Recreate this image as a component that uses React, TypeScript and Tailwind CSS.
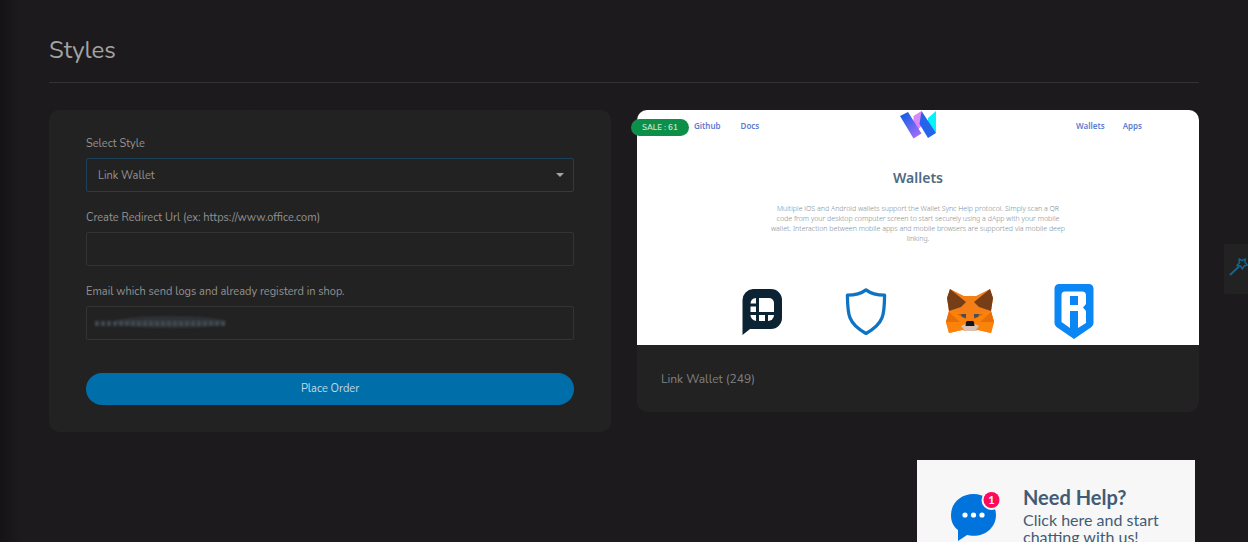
import { useState } from 'react';

const wallets = [
  { name: 'Pillar', icon: <PillarIcon /> },
  { name: 'Trust', icon: <ShieldIcon /> },
  { name: 'MetaMask', icon: <FoxIcon /> },
  { name: 'Ronin', icon: <RoninIcon /> },
];

function PillarIcon() {
  return (
    <svg width="40" height="46" viewBox="0 0 40 46" aria-hidden="true">
      <path d="M11 0h18a11 11 0 0 1 11 11v18a11 11 0 0 1-11 11H8l-7.500 6V11A11 11 0 0 1 11 0Z" fill="#0b2333" />
      <g fill="#fff">
        <path d="M14 9v5.500H8.500A6 6 0 0 1 14 9Z" />
        <path d="M17 9h10a5 5 0 0 1 5 5v9H17Z" />
        <path d="M8.500 17.500H14V23H8.500Z" />
        <path d="M8.500 26H14v6a6 6 0 0 1-5.500-6Z" />
        <path d="M17 26h6v6h-6Z" />
        <path d="M26 26h6a6 6 0 0 1-6 6Z" />
      </g>
    </svg>
  );
}

function ShieldIcon() {
  return (
    <svg width="42" height="47" viewBox="0 0 40 46" fill="none" aria-hidden="true">
      <path
        d="M20 1.800C14.500 6 8.500 7 1.800 7c.2 19 .6 28 18.200 37.500C37.600 35 38 26 38.200 7 31.500 7 25.500 6 20 1.800Z"
        stroke="#0f73c4"
        strokeWidth="3.200"
        strokeLinejoin="round"
      />
    </svg>
  );
}

function FoxIcon() {
  return (
    <svg width="48" height="45" viewBox="0 0 48 45" aria-hidden="true">
      <path d="M4 0 18 7h12L44 0l3 9-2 13 3 11-3 11-13-3-4 1h-8l-4-1-13 3L0 33l3-11L1 9Z" fill="#f57f17" />
      <path d="m3 22 13 2 4 8-4 9L3 44 0 33Zm42 0-13 2-4 8 4 9 13 3 3-11Z" fill="#fb830a" />
      <path d="m0 33 3-10 11 10Zm48 0-3-10-11 10Z" fill="#e86d08" />
      <path d="M4 0 20 13 15 18 3 22 1 9Zm40 0L28 13l5 5 12 4 2-13Z" fill="#763d16" />
      <path d="m11 25 8 0 1 5Zm26 0-8 0-1 5Z" fill="#d5600c" />
      <path d="m15 25 5 0 0 4-4-1Zm18 0-5 0 0 4 4-1Z" fill="#4a4c50" />
      <path d="m15 37 6-3h6l6 3-4 5H19Z" fill="#d9c2b4" />
      <path d="m20 33 1-1h6l1 1 .500 4h-9Z" fill="#161616" />
    </svg>
  );
}

function RoninIcon() {
  return (
    <svg width="40" height="55" viewBox="0 0 40 55" aria-hidden="true">
      <path d="M5 0h30a4.500 4.500 0 0 1 4.500 4.500V39a5 5 0 0 1-2 4L20 55 2.500 43a5 5 0 0 1-2-4V4.500A4.500 4.500 0 0 1 5 0Z" fill="#0a86f5" />
      <path
        d="M11 7.500h17a4 4 0 0 1 4 4V20l-3 3.500 3 3.500v12l-8 5V27h-8v17l-8.500-6V11A3.500 3.500 0 0 1 11 7.500ZM16 12v9h8v-9Z"
        fill="#fff"
        fillRule="evenodd"
      />
    </svg>
  );
}

function Logo() {
  return (
    <svg width="38" height="28" viewBox="0 0 38 28" aria-hidden="true">
      <defs>
        <linearGradient id="wave" x1="0" y1="0" x2="0.6" y2="1">
          <stop offset="0.2" stopColor="#2060e8" />
          <stop offset="1" stopColor="#9b6cf8" />
        </linearGradient>
      </defs>
      <path d="M22.500 0v15L14.500 23V5Z" fill="#dc86f8" />
      <path d="M37 0v22l-8-9V7Z" fill="#06f3fd" />
      <path d="m1 5 8-4 13.500 21.500-8 5Z" fill="url(#wave)" />
      <path d="M22.500 0 37 22l-8 5-8.500-14Z" fill="#2563eb" />
    </svg>
  );
}

function ChatWidget() {
  return (
    <button
      type="button"
      className="absolute right-[53px] bottom-0 flex h-[82px] w-[278px] items-start gap-[23px] overflow-hidden bg-[#f7f7f7] pt-[27px] pl-[34px] text-left font-['Lato',sans-serif] text-[#425b76]"
    >
      <svg width="49" height="52" viewBox="0 0 49 52" className="mt-1 shrink-0" aria-hidden="true">
        <path d="M22.500 3C10 3 0 12 0 24c0 7 2.500 11.500 7 15v11l9-6c2 .5 4 .8 6.500.8C35 44.800 45 36 45 24S35 3 22.500 3Z" fill="#0073dd" />
        <g fill="#fff">
          <circle cx="14" cy="24" r="2.600" />
          <circle cx="22.500" cy="24" r="2.600" />
          <circle cx="31" cy="24" r="2.600" />
        </g>
        <circle cx="40.500" cy="9" r="10" fill="#f7f7f7" />
        <circle cx="40.500" cy="9" r="8" fill="#ff0a5b" />
        <text x="40.500" y="13" textAnchor="middle" fontSize="11" fontWeight="700" fill="#fff">1</text>
      </svg>
      <span>
        <strong className="block text-xl leading-5 font-bold">Need Help?</strong>
        <span className="mt-1 block text-base leading-[17px]">
          Click here and start
          <br />
          chatting with us!
        </span>
      </span>
    </button>
  );
}

function StylePreview() {
  return (
    <article className="relative rounded-[10px] bg-[#222]">
      <span className="absolute top-[9px] -left-1.5 rounded-full bg-[#0c8f49] px-[11px] text-[8px] leading-[17px] font-semibold text-[#d5e8dc]">
        SALE : 61
      </span>
      <div className="rounded-t-[10px] bg-white pb-1.5 font-['Noto_Sans',sans-serif]">
        <nav className="flex items-start justify-between px-[57px] pt-px text-[8px] leading-4 font-semibold text-[#5c7bd0]">
          <div className="mt-[7px] flex w-20 gap-5">
            <a href="#github">Github</a>
            <a href="#docs">Docs</a>
          </div>
          <Logo />
          <div className="mt-[7px] flex w-20 justify-end gap-[18px]">
            <a href="#wallets">Wallets</a>
            <a href="#apps">Apps</a>
          </div>
        </nav>
        <h2 className="mt-[29px] text-center text-sm leading-5 font-semibold text-[#4f6b80]">Wallets</h2>
        <p className="mx-auto mt-4 max-w-[296px] text-center text-[7px] leading-[10px] font-light text-[#818c93]">
          Multiple iOS and Android wallets support the Wallet Sync Help protocol. Simply scan a QR code from your
          desktop computer screen to start securely using a dApp with your mobile wallet. Interaction between mobile
          apps and mobile browsers are supported via mobile deep linking.
        </p>
        <ul className="mx-auto mt-10 grid max-w-[416px] grid-cols-4 items-center justify-items-center">
          {wallets.map((wallet) => (
            <li key={wallet.name} aria-label={wallet.name}>{wallet.icon}</li>
          ))}
        </ul>
      </div>
      <p className="px-6 pt-6 pb-[23px] text-xs leading-5 text-[#808080]">Link Wallet (249)</p>
    </article>
  );
}

export default function App() {
  const [style, setStyle] = useState('link');
  const [redirectUrl, setRedirectUrl] = useState('');
  const [email, setEmail] = useState('');

  return (
    <div className="h-screen bg-white pr-1 pb-1 font-['Nunito','Lato',sans-serif]">
      <div className="relative h-full overflow-hidden bg-[#1c1a1c] bg-linear-to-r from-[#151314] to-[#1c1a1c] to-[20px] px-[49px] pt-8">
        <h1 className="border-b border-[#343232] pb-[14px] text-2xl leading-9 text-[#a3a3a3]">Styles</h1>

        <main className="mt-[27px] grid grid-cols-2 items-start gap-[26px]">
          <form
            onSubmit={(e) => e.preventDefault()}
            className="rounded-[10px] bg-[#222] px-[37px] pt-[26px] pb-[27px] text-[11px] text-[#929292]"
          >
            <label htmlFor="style" className="block leading-4">Select Style</label>
            <div className="relative mt-1.5">
              <select
                id="style"
                value={style}
                onChange={(e) => setStyle(e.target.value)}
                className="block h-[34px] w-full appearance-none rounded-xs border border-[#1b4159] bg-[#222] px-[11px] pt-0.5 outline-none"
              >
                <option value="link">Link Wallet</option>
              </select>
              <svg width="8" height="4" viewBox="0 0 8 4" className="pointer-events-none absolute top-[15px] right-2.5" aria-hidden="true">
                <path d="M0 0h8L4 4Z" fill="#a5a5a5" />
              </svg>
            </div>

            <label htmlFor="redirect" className="mt-[18px] block leading-4">
              Create Redirect Url (ex: https://www.office.com)
            </label>
            <input
              id="redirect"
              type="text"
              value={redirectUrl}
              onChange={(e) => setRedirectUrl(e.target.value)}
              className="mt-1.5 block h-[34px] w-full rounded-xs border border-[#343434] px-[11px] outline-none"
            />

            <label htmlFor="email" className="mt-[18px] block leading-4">
              Email which send logs and already registerd in shop.
            </label>
            <div className="relative mt-1.5">
              <input
                id="email"
                type="text"
                value={email}
                onChange={(e) => setEmail(e.target.value)}
                className="block h-[34px] w-full rounded-xs border border-[#343434] px-[11px] outline-none"
              />
              <svg width="144" height="22" viewBox="0 0 144 22" className="pointer-events-none absolute top-1.5 left-1" aria-hidden="true">
                <defs>
                  <filter id="smudge">
                    <feGaussianBlur stdDeviation="1.2" />
                  </filter>
                </defs>
                <g filter="url(#smudge)">
                  <ellipse cx="80" cy="10" rx="56" ry="6" fill="#2d3135" />
                  <path d="M5 11.500h131" stroke="#3f4851" strokeWidth="5" strokeDasharray="4 2" />
                </g>
              </svg>
            </div>

            <button type="submit" className="mt-[33px] block h-8 w-full rounded-full bg-[#006fa9] text-[#c3d9e4]">
              Place Order
            </button>
          </form>

          <StylePreview />
        </main>

        <button
          type="button"
          aria-label="Customize"
          className="absolute top-[244px] right-0 flex h-[50px] w-6 items-center justify-end rounded-l-xs bg-[#222]"
        >
          <svg width="19" height="22" viewBox="0 0 19 22" fill="none" stroke="#0f6695" strokeWidth="1.500" strokeLinejoin="round" aria-hidden="true">
            <path d="M1 17 10 8.500" strokeWidth="2" />
            <path d="m10 1 3 1.500L16.500 1l-.5 3.500L18.500 7 15 8l-1.500 3-2-3L8 7.500l2.500-2.800Z" />
          </svg>
        </button>

        <ChatWidget />
      </div>
    </div>
  );
}
